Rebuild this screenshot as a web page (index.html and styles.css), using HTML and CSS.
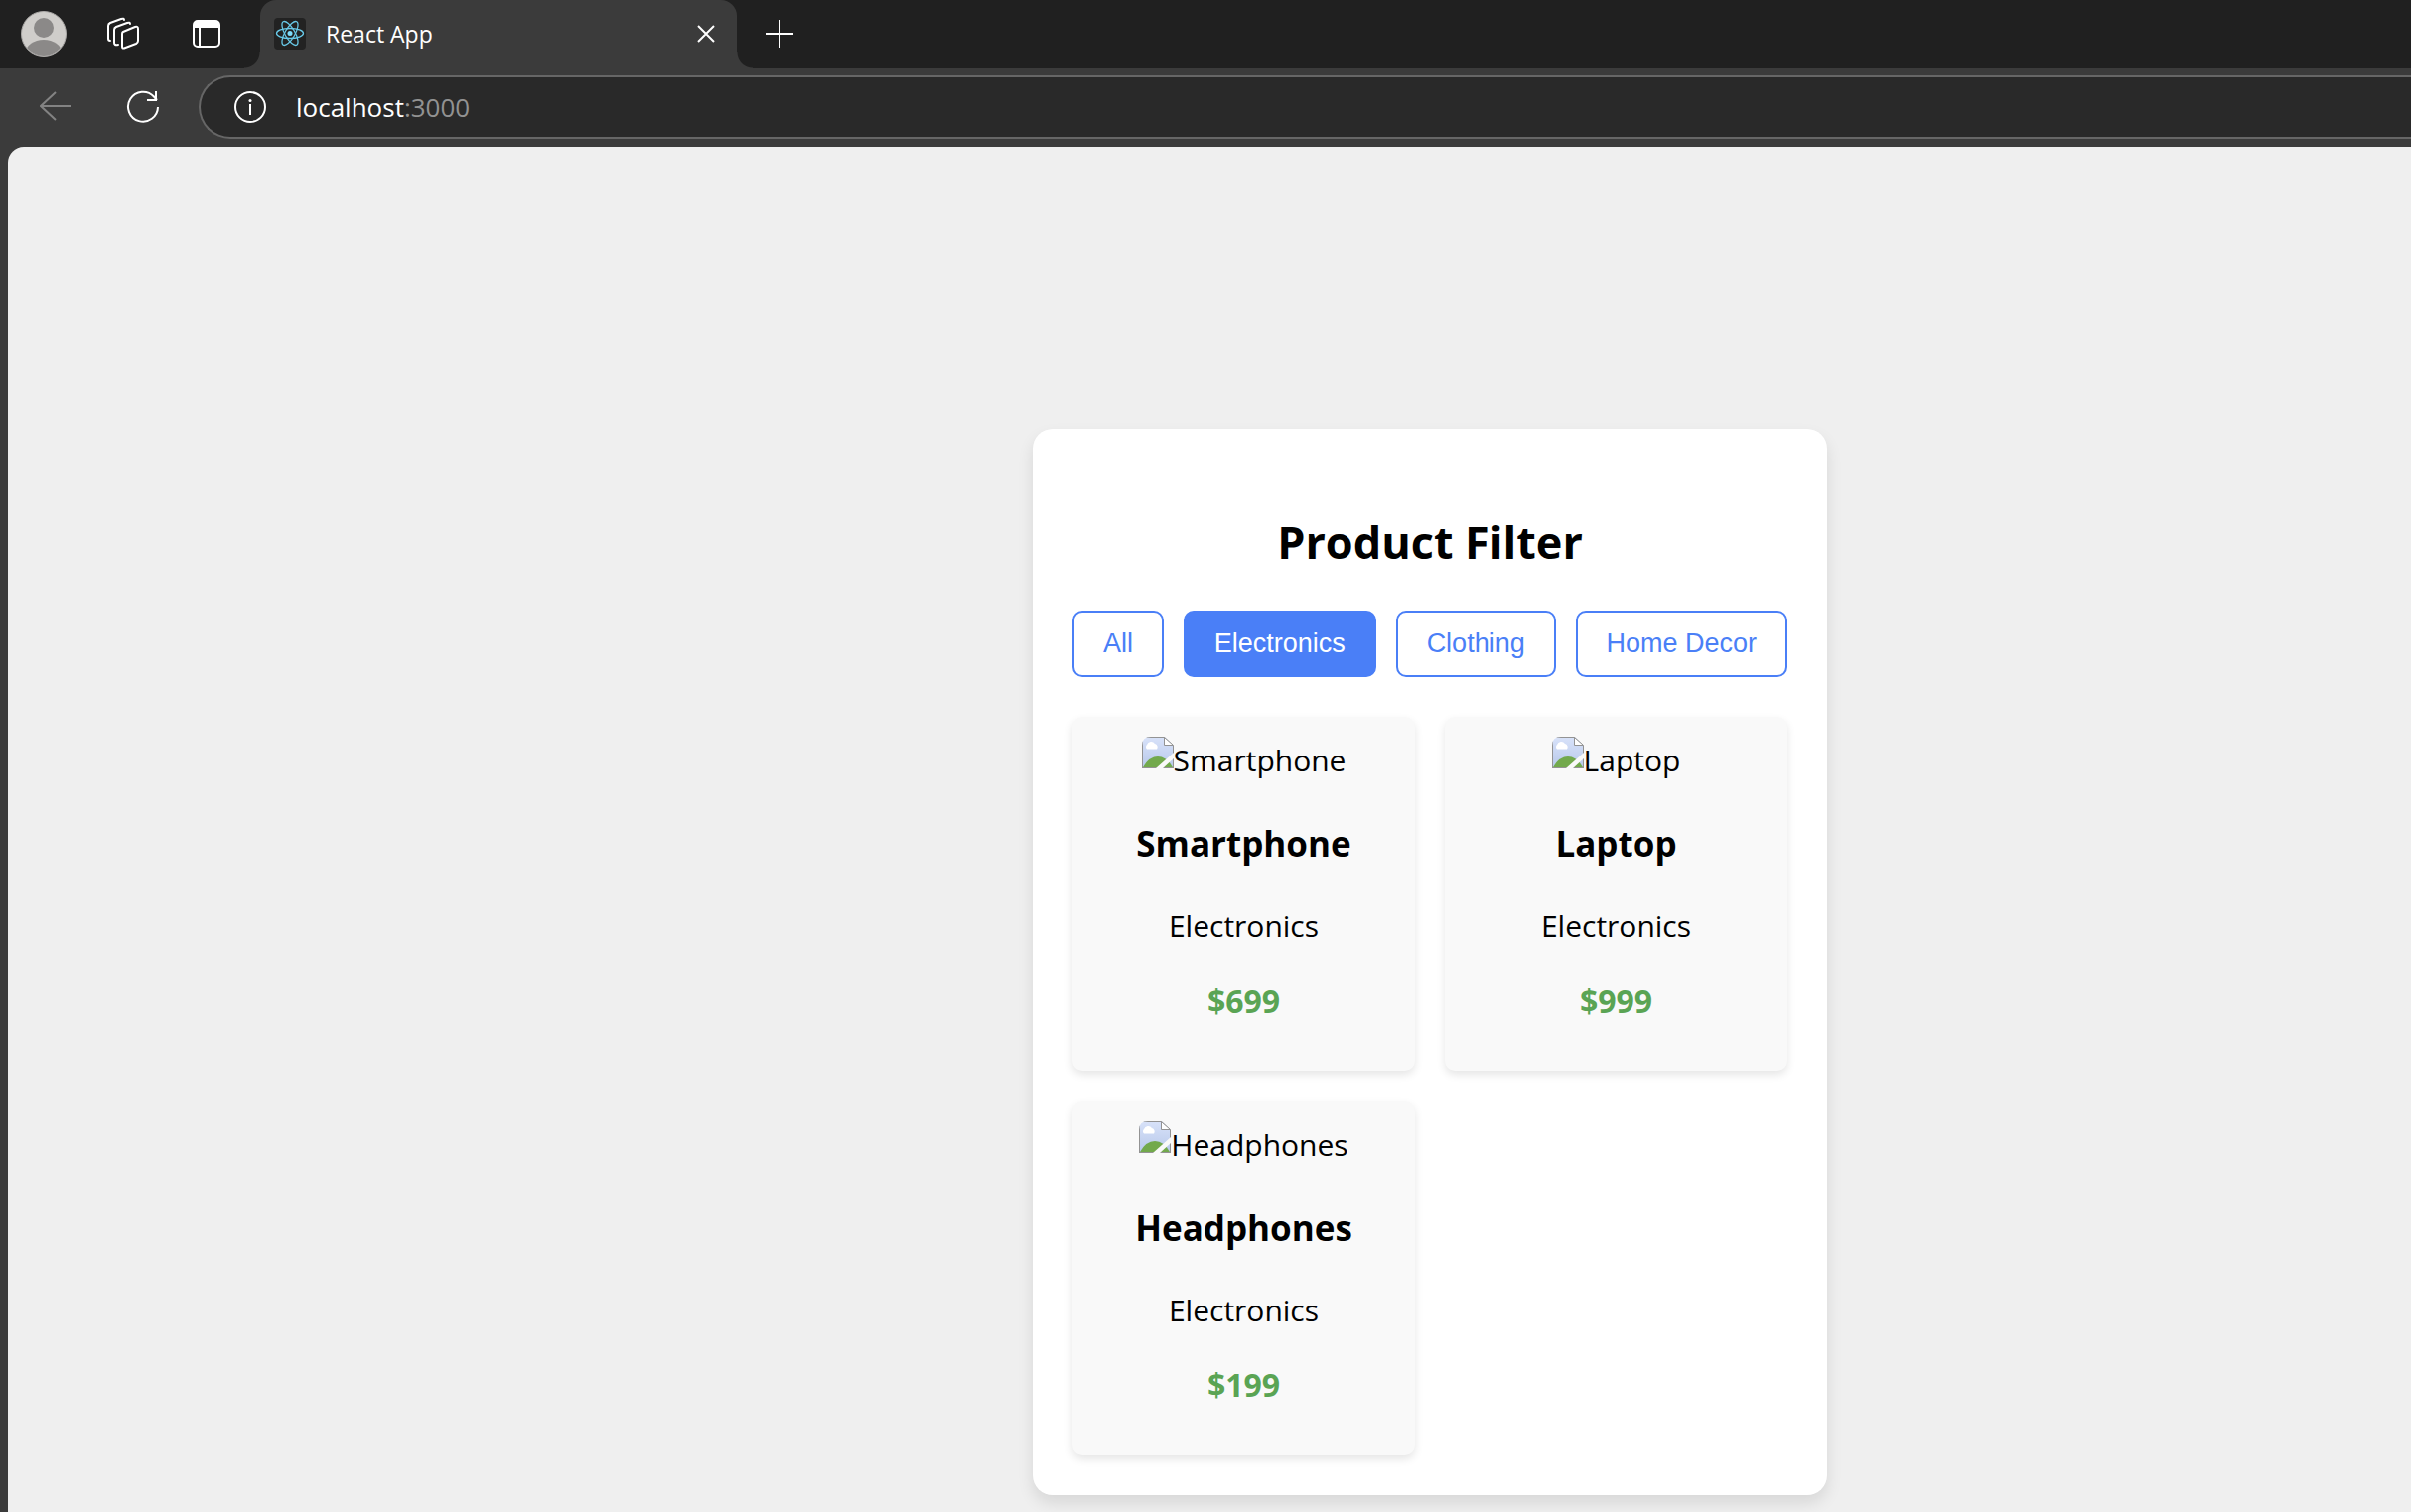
FILE: index.html
```html
<!DOCTYPE html>
<html lang="en">
<head>
<meta charset="utf-8">
<title>React App</title>
<meta name="viewport" content="width=device-width, initial-scale=1">
<link rel="stylesheet" href="styles.css">
</head>
<body>
<svg class="sprite" aria-hidden="true">
  <defs>
    <linearGradient id="sky" x1="0" y1="0" x2="0" y2="1">
      <stop offset="0" stop-color="#d8e2f9"/>
      <stop offset="1" stop-color="#b7c8ea"/>
    </linearGradient>
    <clipPath id="rounded"><path d="M9 0H32V32H0V9Q0 0 9 0Z"/></clipPath>
    <symbol id="missing" viewBox="0 0 32 32">
      <g clip-path="url(#rounded)">
        <path d="M0 0H23L32 9V32H0Z" fill="url(#sky)"/>
        <path d="M5 12.500a3 3 0 0 1 0-4.500a4.500 4.500 0 0 1 8-1a3.500 3.500 0 0 1 2 5.500Z" fill="#fff"/>
        <path d="M1 31Q7 20 16 20Q25 20 31 31Z" fill="#72a94c"/>
        <path d="M.5 32V.5H22.500L31.500 9V32M0 31.500H32" fill="none" stroke="#939393"/>
        <path d="M22.500 .5V8.500H31.500Z" fill="#fff" stroke="#939393"/>
        <path d="M32 16L14 32H21L32 22Z" fill="#f9f9f9"/>
      </g>
    </symbol>
  </defs>
</svg>

<header class="browser">
  <div class="tabbar">
    <div class="tools">
      <button class="icon-button" aria-label="Profile">
        <svg width="46" height="46" viewBox="0 0 46 46"><clipPath id="face"><circle cx="23" cy="23" r="22"/></clipPath><circle cx="23" cy="23" r="22.500" fill="#cfcdca" stroke="#aaa8a6"/><g clip-path="url(#face)" fill="#8b8988"><circle cx="23" cy="17" r="10"/><ellipse cx="23" cy="42" rx="18" ry="13"/></g></svg>
      </button>
      <button class="icon-button" aria-label="Workspaces">
        <svg width="34" height="34" viewBox="0 0 34 34" fill="none" stroke="#fff" stroke-width="2" stroke-linecap="round" stroke-linejoin="round"><path d="M17 15L29 10Q32 9 32 12V24Q32 26 30 27L18 31.500Q16 32 16 30V17Q16 15.500 17 15Z"/><path d="M12 28Q8 29 8 26V13Q8 11 10 10L21 6Q24 5 24 7"/><path d="M4 24Q2 24 2 22V9Q2 7 4 6L15 2Q18 1 18 3"/></svg>
      </button>
      <button class="icon-button tab-actions" aria-label="Tab actions">
        <svg width="28" height="28" viewBox="0 0 28 28" fill="none" stroke="#fff" stroke-width="2"><rect x="1" y="1" width="26" height="26" rx="4"/><path d="M1 8V5Q1 1 5 1H23Q27 1 27 5V8Z" fill="#fff" stroke="none"/><path d="M7 8V27"/></svg>
      </button>
    </div>
    <div class="tab">
      <svg class="favicon" width="32" height="32" viewBox="0 0 32 32"><rect width="32" height="32" rx="4" fill="#222"/><circle cx="16" cy="15.500" r="2.500" fill="#7ddcfb"/><g fill="none" stroke="#68c9e8" stroke-width="1.300"><ellipse cx="16" cy="15.500" rx="13.500" ry="5"/><ellipse cx="16" cy="15.500" rx="13.500" ry="5" transform="rotate(60 16 15.500)"/><ellipse cx="16" cy="15.500" rx="13.500" ry="5" transform="rotate(120 16 15.500)"/></g></svg>
      <span class="tab-title">React App</span>
      <button class="icon-button" aria-label="Close tab">
        <svg width="18" height="18" viewBox="0 0 18 18" stroke="#fff" stroke-width="2"><path d="M1 1L17 17M17 1L1 17"/></svg>
      </button>
    </div>
    <button class="icon-button new-tab" aria-label="New tab">
      <svg width="28" height="28" viewBox="0 0 28 28" stroke="#fff" stroke-width="2"><path d="M14 0V28M0 14H28"/></svg>
    </button>
  </div>
  <div class="toolbar">
    <button class="icon-button" aria-label="Back">
      <svg width="32" height="32" viewBox="0 0 32 32" fill="none" stroke="#838383" stroke-width="2"><path d="M1 15H32M16 1L1 15L16 29"/></svg>
    </button>
    <button class="icon-button" aria-label="Refresh">
      <svg width="34" height="34" viewBox="0 0 34 34" fill="none" stroke="#fff" stroke-width="2"><path d="M32 17A15 15 0 1 1 28 6.500L31 10M21 10H30V1"/></svg>
    </button>
    <div class="address">
      <button class="icon-button" aria-label="View site information">
        <svg width="32" height="32" viewBox="0 0 32 32" fill="none" stroke="#fff" stroke-width="2"><circle cx="16" cy="16" r="15"/><path d="M16 13V24"/><circle cx="16" cy="9.500" r="1.500" fill="#fff" stroke="none"/></svg>
      </button>
      <div class="url" role="textbox" contenteditable="true" spellcheck="false" aria-label="Address">localhost<span class="port">:3000</span></div>
    </div>
  </div>
</header>

<main class="page">
  <section class="filter">
    <h2 class="filter-title">Product Filter</h2>
    <div class="categories">
      <button class="category">All</button>
      <button class="category active" aria-pressed="true">Electronics</button>
      <button class="category">Clothing</button>
      <button class="category">Home Decor</button>
    </div>
    <div class="products">
      <article class="product">
        <div class="picture"><svg width="32" height="32" aria-hidden="true"><use href="#missing"/></svg><span>Smartphone</span></div>
        <h3 class="name">Smartphone</h3>
        <p class="kind">Electronics</p>
        <p class="price">$699</p>
      </article>
      <article class="product">
        <div class="picture"><svg width="32" height="32" aria-hidden="true"><use href="#missing"/></svg><span>Laptop</span></div>
        <h3 class="name">Laptop</h3>
        <p class="kind">Electronics</p>
        <p class="price">$999</p>
      </article>
      <article class="product">
        <div class="picture"><svg width="32" height="32" aria-hidden="true"><use href="#missing"/></svg><span>Headphones</span></div>
        <h3 class="name">Headphones</h3>
        <p class="kind">Electronics</p>
        <p class="price">$199</p>
      </article>
    </div>
  </section>
</main>
</body>
</html>
```

FILE: styles.css
```css
* {
  box-sizing: border-box;
}

body {
  display: flex;
  flex-direction: column;
  min-height: 100vh;
  margin: 0;
  background: #3b3b3b;
  color: #000;
  font-family: "Segoe UI", "Open Sans", "Noto Sans", sans-serif;
  font-size: 30px;
  line-height: 47px;
}

.sprite {
  position: absolute;
  width: 0;
  height: 0;
}

svg {
  display: block;
  flex: none;
}

/* Browser frame */
.icon-button {
  display: flex;
  padding: 0;
  border: 0;
  background: none;
}

.tabbar {
  display: flex;
  align-items: center;
  height: 68px;
  background: #202020;
}

.tools {
  display: flex;
  align-items: center;
  gap: 40px;
  width: 262px;
  padding: 0 40px 0 21px;
}

.tab-actions {
  margin-left: auto;
}

.tab {
  position: relative;
  display: flex;
  align-items: center;
  gap: 20px;
  width: 480px;
  height: 68px;
  padding: 0 22px 0 14px;
  border-radius: 16px 16px 0 0;
  background: #3b3b3b;
}

.tab::before,
.tab::after {
  content: "";
  position: absolute;
  bottom: 0;
  width: 16px;
  height: 16px;
}

.tab::before {
  right: 100%;
  background: radial-gradient(circle at 0 0, transparent 15px, #3b3b3b 16px);
}

.tab::after {
  left: 100%;
  background: radial-gradient(circle at 100% 0, transparent 15px, #3b3b3b 16px);
}

.tab-title {
  flex: 1;
  color: #fff;
  font-size: 23px;
  line-height: 32px;
}

.new-tab {
  margin-left: 29px;
}

.toolbar {
  display: flex;
  align-items: center;
  gap: 55px;
  height: 80px;
  padding-left: 40px;
}

.address {
  display: flex;
  flex: 1;
  align-items: center;
  gap: 30px;
  height: 64px;
  margin-left: -16px;
  padding-left: 34px;
  border: 2px solid #666;
  border-right: 0;
  border-radius: 32px 0 0 32px;
  background: #292929;
}

.url {
  flex: 1;
  color: #fff;
  font-size: 26px;
  line-height: 36px;
}

.port {
  color: #929292;
}

/* The visible part of the window is cut on the right, so the card sits right of its middle */
.page {
  display: flex;
  flex: 1;
  align-items: flex-start;
  justify-content: center;
  margin-left: 8px;
  padding: 284px 0 17px 444px;
  border-top-left-radius: 16px;
  background: #efefef;
}

.filter {
  width: 100%;
  max-width: 800px;
  padding: 40px;
  border-radius: 20px;
  background: #fff;
  box-shadow: 0 8px 16px rgba(0, 0, 0, 0.1);
}

.filter-title {
  margin: 40px 0 36px;
  font-size: 45px;
  line-height: 67px;
  text-align: center;
}

.categories {
  display: flex;
  gap: 20px;
  margin-bottom: 40px;
}

.category {
  flex: 1 1 auto;
  height: 67px;
  padding: 0 28px;
  border: 2px solid #4a7ff7;
  border-radius: 10px;
  background: #fff;
  color: #4a7ff7;
  font-family: "Liberation Sans", Arial, sans-serif;
  font-size: 27px;
  white-space: nowrap;
}

.category.active {
  background: #4a7ff7;
  color: #fff;
}

.products {
  display: grid;
  grid-template-columns: repeat(2, 1fr);
  gap: 30px;
}

.product {
  padding: 20px;
  border-radius: 10px;
  background: #f9f9f9;
  box-shadow: 0 4px 8px rgba(0, 0, 0, 0.1);
  text-align: center;
}

.picture {
  display: flex;
  justify-content: center;
}

.name {
  margin: 34px 0 33px;
  font-size: 35px;
  line-height: 53px;
}

.kind,
.price {
  margin: 28px 0;
}

.price {
  color: #5aa454;
  font-size: 32px;
  font-weight: 700;
}
```
